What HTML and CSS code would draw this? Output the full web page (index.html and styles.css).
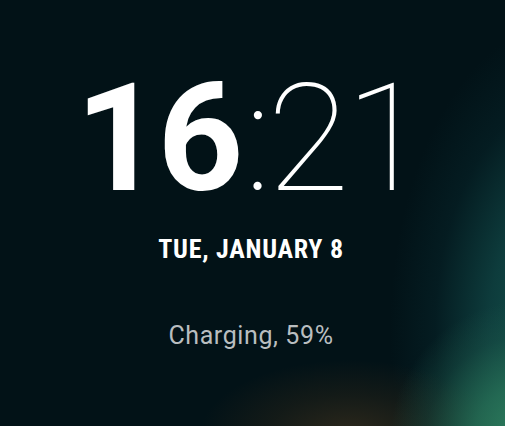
FILE: index.html
```html
<!DOCTYPE html>
<html>
<head>
<meta charset="utf-8">
<link rel="stylesheet" href="styles.css">
</head>
<body>
<div class="screen">
  <div class="glow glow-teal"></div>
  <div class="glow glow-amber"></div>
  <div class="glow glow-green"></div>
  <main class="lock">
    <div class="clock"><span class="hours">16</span><span class="minutes">:21</span></div>
    <div class="date">TUE, JANUARY 8</div>
    <div class="status">Charging, 59%</div>
  </main>
</div>
</body>
</html>
```
FILE: styles.css
```css
html, body {
  margin: 0;
  padding: 0;
  background: #021217;
}
.screen {
  position: relative;
  width: 505px;
  height: 426px;
  overflow: hidden;
  background: #021217;
  font-family: Roboto, "Noto Sans", sans-serif;
}
.glow {
  position: absolute;
  border-radius: 50%;
  pointer-events: none;
}
.glow-teal {
  left: 390px;
  top: 20px;
  width: 360px;
  height: 620px;
  background: radial-gradient(closest-side, rgba(22,92,82,1) 0%, rgba(14,62,62,0.95) 45%, rgba(6,35,40,0.6) 75%, rgba(2,18,23,0) 100%);
}
.glow-amber {
  left: 200px;
  top: 360px;
  width: 300px;
  height: 150px;
  background: radial-gradient(closest-side, rgba(52,44,28,0.85), rgba(36,34,24,0.5) 55%, rgba(2,18,23,0) 100%);
}
.glow-green {
  left: 390px;
  top: 300px;
  width: 280px;
  height: 280px;
  background: radial-gradient(closest-side, rgba(48,130,95,1), rgba(40,115,88,0.8) 40%, rgba(30,90,75,0.35) 75%, rgba(2,18,23,0) 100%);
}
.lock {
  position: relative;
  display: flex;
  flex-direction: column;
  align-items: center;
  padding-top: 64px;
}
.clock {
  font-size: 150px;
  line-height: 1;
  color: #ffffff;
  margin-left: -6px;
  white-space: nowrap;
}
.hours {
  font-weight: 700;
  letter-spacing: -4px;
  margin-right: 5px;
}
.minutes {
  font-weight: 100;
  letter-spacing: -4px;
}
.date {
  margin-top: 22px;
  margin-left: -3px;
  font-size: 26px;
  line-height: 1;
  font-weight: 700;
  color: #ffffff;
  font-stretch: condensed;
  letter-spacing: 0.75px;
}
.status {
  margin-top: 61px;
  margin-left: -3px;
  font-size: 25px;
  line-height: 1;
  color: #b9bec0;
  letter-spacing: 0.6px;
}
```
